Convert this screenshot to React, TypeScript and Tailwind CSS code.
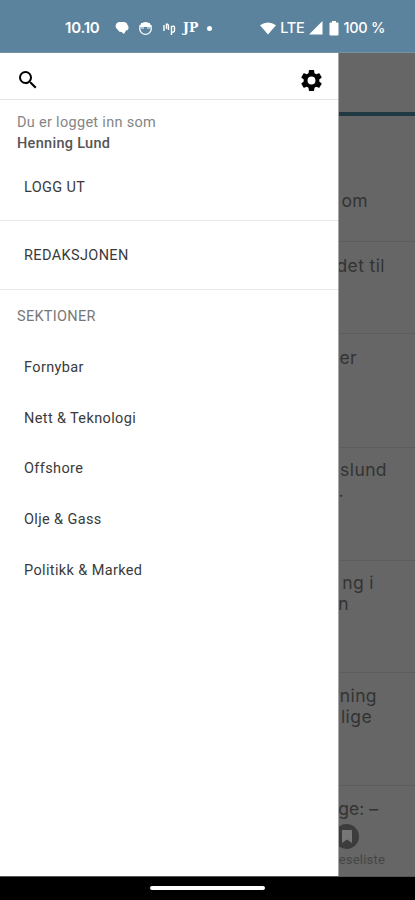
const sections = ['Fornybar', 'Nett & Teknologi', 'Offshore', 'Olje & Gass', 'Politikk & Marked'];

const articles = [
  { height: 'h-[126px] pt-[74px]', lines: [{ text: 'om', pad: 'pr-[47px]' }] },
  { height: 'h-[92px] pt-[13px]', lines: [{ text: 'det til', pad: 'pr-[30px]' }] },
  { height: 'h-[114px] pt-[13px]', lines: [{ text: 'er', pad: 'pr-[58px]' }] },
  { height: 'h-[113px] pt-[11px]', lines: [{ text: 'slund', pad: 'pr-[28px]' }, { text: '.', pad: 'pr-[71px]' }] },
  { height: 'h-[112px] pt-[11px]', lines: [{ text: 'ng i', pad: 'pr-[41px]' }, { text: 'n', pad: 'pr-[66px]' }] },
  { height: 'h-[113px] pt-[12px]', lines: [{ text: 'ning', pad: 'pr-[38px]' }, { text: 'lige', pad: 'pr-[43px]' }] },
];

function StatusBar() {
  return (
    <header className="flex h-[53px] shrink-0 items-center border-b border-[#7791a1] bg-[#5b839d] pt-[4px] pl-[65px] text-white">
      <span className="w-[50px] font-['Inter'] text-[15px] font-semibold tracking-[-0.2px]">10.10</span>
      <svg className="h-[14px] w-[14px]" viewBox="0 0 14 14" fill="currentColor">
        <path d="M3.500 1h5q3.500 0 4 3 1.500 1.500 1 3.500-.5 2-2.500 2L9 13 6.500 11Q4 11.500 3 9 .5 7.500.5 5 .8 2 3.500 1Z" />
      </svg>
      <svg className="ml-[9px] h-[15px] w-[15px]" viewBox="0 0 15 15" fill="none" stroke="currentColor">
        <circle cx="7.500" cy="7.500" r="5.800" strokeWidth="1.300" />
        <path d="M3 3h9M1.500 5h12" strokeWidth="2" />
        <path d="M3 7h3M9 7h3" strokeWidth="1" />
      </svg>
      <svg className="ml-[9px] h-[15px] w-[15px]" viewBox="0 0 15 15" fill="none" stroke="currentColor" strokeWidth="1.400">
        <path d="M2 4v6M4.500 8V2.500M4.500 3.500q2-1 2 2V9M9.500 14V5M9.500 5.500q3-1 3 1v3q0 2-3 1.500" />
      </svg>
      <span className="ml-[6px] font-['DejaVu_Serif'] text-[12.5px] leading-4 font-bold">JP</span>
      <span className="ml-[9px] h-[5px] w-[5px] rounded-full bg-white" />
      <div className="mr-[30px] ml-auto flex items-center">
        <svg className="h-[13px] w-[16px]" viewBox="0 0 16 14" preserveAspectRatio="none" fill="currentColor">
          <path d="M0 3.500Q8-2.500 16 3.500L8 13.500Z" />
        </svg>
        <span className="ml-[4px] font-['Inter'] text-[14.5px] font-medium tracking-[-0.3px]">LTE</span>
        <svg className="ml-[5px] h-[14px] w-[14px]" viewBox="0 0 14 14" fill="currentColor">
          <path d="M0 13.500 13.500 0v13.500Z" />
        </svg>
        <svg className="ml-[6px] h-[15px] w-[10px]" viewBox="0 0 10 15" fill="currentColor">
          <path d="M3 0h4v1.500h1.500q1 0 1 1v11q0 1-1 1h-7q-1 0-1-1v-11q0-1 1-1H3Z" />
        </svg>
        <span className="ml-[4px] font-['Inter'] text-[14.5px] font-medium tracking-[-0.3px] whitespace-nowrap">100 %</span>
      </div>
    </header>
  );
}

function Drawer() {
  return (
    <aside className="w-[339px] shrink-0 border-r border-[#a6a6a6] bg-white text-[14.5px] leading-5 tracking-[0.37px] text-[#3a3a3a]">
      <div className="flex h-[47px] items-center justify-between border-b border-[#e4e4e4] pt-[8px] pr-[14px] pl-[16px] text-black">
        <svg className="h-6 w-6" viewBox="0 0 24 24" fill="currentColor">
          <path d="M15.500 14h-.79l-.28-.27A6.471 6.471 0 0 0 16 9.500 6.500 6.500 0 1 0 9.500 16c1.610 0 3.090-.59 4.230-1.570l.27.28v.79l5 4.990L20.490 19l-4.990-5zm-6 0C7.010 14 5 11.990 5 9.500S7.010 5 9.500 5 14 7.010 14 9.500 11.990 14 9.500 14z" />
        </svg>
        <svg className="h-[25px] w-[25px]" viewBox="0 0 24 24" fill="currentColor">
          <path d="M19.430 12.980c.04-.32.07-.64.07-.98s-.03-.66-.07-.98l2.110-1.650c.19-.15.24-.42.12-.64l-2-3.460c-.12-.22-.39-.3-.61-.22l-2.490 1c-.52-.4-1.080-.73-1.690-.98l-.38-2.650C14.460 2.180 14.250 2 14 2h-4c-.25 0-.46.18-.49.42l-.38 2.650c-.61.25-1.170.59-1.690.98l-2.490-1c-.23-.09-.49 0-.61.22l-2 3.460c-.13.22-.07.49.12.64l2.110 1.650c-.04.32-.07.65-.07.98s.03.66.07.98l-2.110 1.650c-.19.15-.24.42-.12.64l2 3.460c.12.22.39.3.61.22l2.490-1c.52.4 1.080.73 1.690.98l.38 2.650c.03.24.24.42.49.42h4c.25 0 .46-.18.49-.42l.38-2.650c.61-.25 1.170-.59 1.690-.98l2.490 1c.23.09.49 0 .61-.22l2-3.460c.12-.22.07-.49-.12-.64l-2.110-1.650zM12 15.800a3.800 3.800 0 1 1 0-7.600 3.800 3.800 0 0 1 0 7.600z" />
        </svg>
      </div>
      <div className="h-[121px] border-b border-[#e9e9e9] px-[17px] pt-[13px]">
        <p className="tracking-[0.3px] text-[#858585]">Du er logget inn som</p>
        <p className="pt-px font-medium tracking-[0.3px] text-[#555]">Henning Lund</p>
        <button className="mt-[24px] block pl-[7px]">LOGG UT</button>
      </div>
      <div className="flex h-[69px] items-center border-b border-[#e9e9e9] pt-[2px] pl-[24px]">REDAKSJONEN</div>
      <h2 className="pt-[17px] pl-[17px] tracking-[0.3px] text-[#777]">SEKTIONER</h2>
      <nav className="pt-[15.500px]">
        {sections.map((section) => (
          <a key={section} className="flex h-[50.800px] items-center pl-[24px]">{section}</a>
        ))}
      </nav>
    </aside>
  );
}

function Articles() {
  return (
    <div className="flex min-w-0 flex-1 flex-col overflow-hidden bg-[#666]">
      <div className="h-[63px] shrink-0 border-b-4 border-[#203841]" />
      {articles.map((article, i) => (
        <div key={i} className={`shrink-0 border-b border-[#5c5c5c] ${article.height}`}>
          {article.lines.map((line) => (
            <p key={line.text} className={`flex justify-end font-['Inter'] text-[17.5px] leading-[21px] tracking-[0.4px] whitespace-nowrap text-[#333] ${line.pad}`}>
              {line.text}
            </p>
          ))}
        </div>
      ))}
      <p className="flex h-[33px] shrink-0 justify-end pt-[12px] pr-[37px] font-['Inter'] text-[17.5px] leading-[21px] whitespace-nowrap text-[#333]">ge: –</p>
      <div className="flex flex-1 flex-col pt-[5px]">
        <div className="-ml-[5px] flex h-[25px] w-[25px] items-center justify-center rounded-full bg-[#3c3c3c]">
          <svg className="h-[13px] w-[10px]" viewBox="0 0 10 13" fill="#777">
            <path d="M0 0h10v13L5 9.500 0 13Z" />
          </svg>
        </div>
        <span className="flex justify-end pt-px pr-[30px] text-[13px] leading-5 tracking-[0.2px] whitespace-nowrap text-[#454545]">eseliste</span>
      </div>
    </div>
  );
}

export default function App() {
  return (
    <main className="flex h-[900px] w-[415px] flex-col overflow-hidden bg-black font-['Roboto',sans-serif]">
      <StatusBar />
      <div className="flex h-[823px] shrink-0">
        <Drawer />
        <Articles />
      </div>
      <footer className="flex flex-1 justify-center border-t border-[#555] pt-[9px]">
        <div className="h-[4px] w-[115px] rounded-full bg-white" />
      </footer>
    </main>
  );
}
